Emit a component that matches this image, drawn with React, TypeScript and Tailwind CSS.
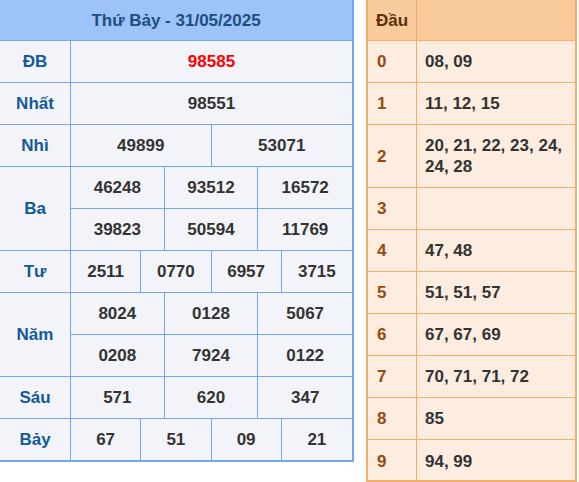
const results = {
  title: "Thứ Bảy - 31/05/2025",
  rows: [
    { label: "ĐB", lines: [["98585"]], special: true },
    { label: "Nhất", lines: [["98551"]] },
    { label: "Nhì", lines: [["49899", "53071"]] },
    { label: "Ba", lines: [["46248", "93512", "16572"], ["39823", "50594", "11769"]] },
    { label: "Tư", lines: [["2511", "0770", "6957", "3715"]] },
    { label: "Năm", lines: [["8024", "0128", "5067"], ["0208", "7924", "0122"]] },
    { label: "Sáu", lines: [["571", "620", "347"]] },
    { label: "Bảy", lines: [["67", "51", "09", "21"]] },
  ],
};

const heads = [
  "08, 09",
  "11, 12, 15",
  "20, 21, 22, 23, 24, 24, 28",
  "",
  "47, 48",
  "51, 51, 57",
  "67, 67, 69",
  "70, 71, 71, 72",
  "85",
  "94, 99",
];

const cols: Record<number, string> = {
  1: "grid-cols-1",
  2: "grid-cols-2",
  3: "grid-cols-3",
  4: "grid-cols-4",
};

export default function App() {
  return (
    <div className="flex w-[579px] h-[482px] bg-white overflow-hidden font-['Liberation_Sans',Arial,sans-serif] font-bold text-[17px] leading-[21px]">
      {/* Ket qua */}
      <div className="w-[354px] h-[462px] bg-[#f3f4f9] border-r-2 border-b-2 border-[#74a7f2]">
        <div className="h-[41px] bg-[#9ec2fa] border-b border-[#74a7f2] flex items-center justify-center text-[#1c4e80]">
          {results.title}
        </div>
        {results.rows.map((row) => (
          <div key={row.label} className="flex border-b border-[#74a7f2] last:border-b-0">
            <div className="w-[71px] shrink-0 border-r border-[#74a7f2] flex items-center justify-center text-[#14599a]">
              {row.label}
            </div>
            <div className="flex-1 flex flex-col">
              {row.lines.map((line, i) => (
                <div key={i} className={`grid ${cols[line.length]} h-[42px] border-b border-[#74a7f2] last:border-b-0 last:h-[41px]`}>
                  {line.map((n, j) => (
                    <div
                      key={j}
                      className={`flex items-center justify-center border-r border-[#74a7f2] last:border-r-0 ${row.special ? "text-[#ff0000]" : "text-[#333333]"}`}
                    >
                      {n}
                    </div>
                  ))}
                </div>
              ))}
            </div>
          </div>
        ))}
      </div>

      {/* Dau */}
      <div className="ml-[12px] w-[211px] h-[482px] bg-[#fdece0] border-l-2 border-r-2 border-b-2 border-[#f5ad68]">
        <div className="flex h-[41px] bg-[#f9ca9b] border-b border-[#f5ad68]">
          <div className="w-[49px] shrink-0 border-r border-[#f5ad68] flex items-center pl-[8px] text-[#5c2e0a]">Đầu</div>
          <div className="flex-1" />
        </div>
        {heads.map((h, i) => (
          <div key={i} className="flex min-h-[42px] border-b border-[#f5ad68] last:border-b-0">
            <div className="w-[49px] shrink-0 border-r border-[#f5ad68] flex items-center pl-[9px] text-[#974a0c]">{i}</div>
            <div className="flex-1 flex items-center px-[8px] py-[10px] text-[#333333]">{h}</div>
          </div>
        ))}
      </div>
    </div>
  );
}
